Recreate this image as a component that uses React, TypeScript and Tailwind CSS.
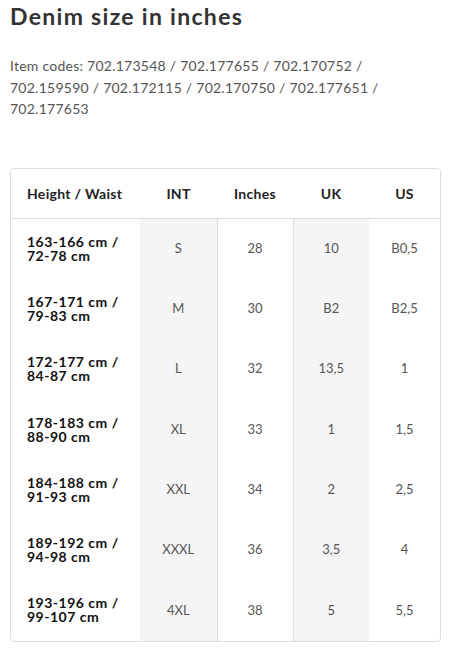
const rows = [
  ["163-166 cm /", "72-78 cm", "S", "28", "10", "B0,5"],
  ["167-171 cm /", "79-83 cm", "M", "30", "B2", "B2,5"],
  ["172-177 cm /", "84-87 cm", "L", "32", "13,5", "1"],
  ["178-183 cm /", "88-90 cm", "XL", "33", "1", "1,5"],
  ["184-188 cm /", "91-93 cm", "XXL", "34", "2", "2,5"],
  ["189-192 cm /", "94-98 cm", "XXXL", "36", "3,5", "4"],
  ["193-196 cm /", "99-107 cm", "4XL", "38", "5", "5,5"],
];

export default function App() {
  return (
    <div className="w-[460px] h-[656px] bg-white px-[10px] pt-[1px] font-['Lato',sans-serif] overflow-hidden">
      <h1 className="text-[23px] leading-[30px] font-bold text-[#333] tracking-[1.3px]">
        Denim size in inches
      </h1>

      <p className="mt-[24px] text-[14px] leading-[21.5px] text-[#555] tracking-[0.25px] w-[370px]">
        Item codes: 702.173548 / 702.177655 / 702.170752 / 702.159590 / 702.172115 / 702.170750 / 702.177651 / 702.177653
      </p>

      <div className="mt-[48px] w-[431px] border border-[#ddd] rounded-[4px] overflow-hidden">
        <table className="w-full border-collapse table-fixed">
          <colgroup>
            <col className="w-[129px]" />
            <col className="w-[77px]" />
            <col className="w-[76px]" />
            <col className="w-[76px]" />
            <col />
          </colgroup>
          <thead>
            <tr className="h-[50px] border-b border-[#ddd] text-[14px] font-bold text-[#222] tracking-[0.3px]">
              <th className="text-left pl-[16px] font-bold">Height / Waist</th>
              <th className="font-bold">INT</th>
              <th className="font-bold">Inches</th>
              <th className="font-bold">UK</th>
              <th className="font-bold">US</th>
            </tr>
          </thead>
          <tbody>
            {rows.map((r, i) => (
              <tr key={i} className="h-[60.3px] text-[13px]">
                <td className="pl-[16px] text-[14px] font-bold text-[#111] leading-[14px] tracking-[0.5px]">
                  {r[0]}
                  <br />
                  {r[1]}
                </td>
                <td className="bg-[#f5f5f5] text-center text-[#555]">{r[2]}</td>
                <td className="border-x border-[#ddd] text-center text-[#555]">{r[3]}</td>
                <td className="bg-[#f5f5f5] text-center text-[#555]">{r[4]}</td>
                <td className="text-center text-[#555]">{r[5]}</td>
              </tr>
            ))}
          </tbody>
        </table>
      </div>
    </div>
  );
}
